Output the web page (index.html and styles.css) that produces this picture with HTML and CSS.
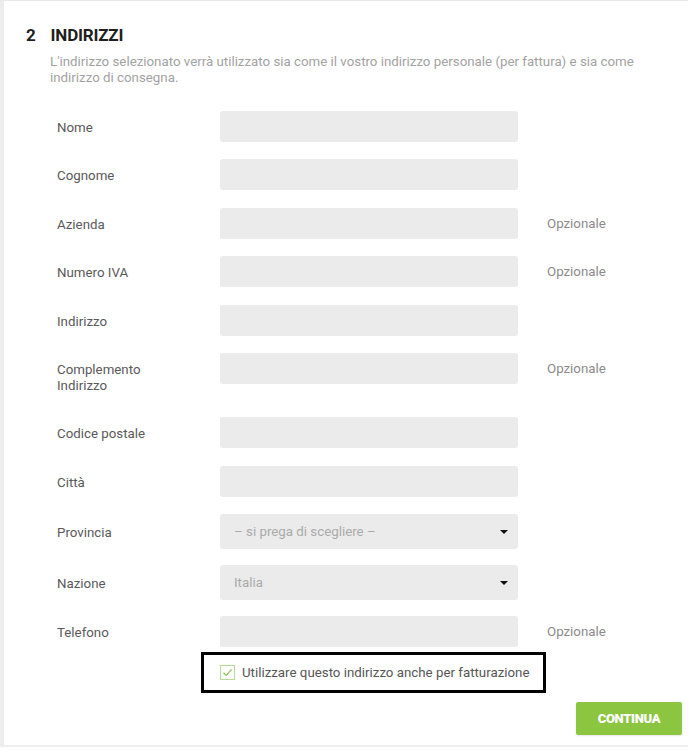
FILE: index.html
```html
<!DOCTYPE html>
<html lang="it">
<head>
<meta charset="utf-8">
<title>Indirizzi</title>
<link rel="stylesheet" href="styles.css">
</head>
<body>
<div class="panel">
  <h2 class="title"><span class="num">2</span><span>INDIRIZZI</span></h2>
  <p class="intro">L'indirizzo selezionato verrà utilizzato sia come il vostro indirizzo personale (per fattura) e sia come indirizzo di consegna.</p>
  <div class="form">
    <div class="row"><span class="label">Nome</span><span class="field"></span></div>
    <div class="row"><span class="label">Cognome</span><span class="field"></span></div>
    <div class="row"><span class="label">Azienda</span><span class="field"></span><span class="opt">Opzionale</span></div>
    <div class="row"><span class="label">Numero IVA</span><span class="field"></span><span class="opt">Opzionale</span></div>
    <div class="row"><span class="label">Indirizzo</span><span class="field"></span></div>
    <div class="row"><span class="label">Complemento<br>Indirizzo</span><span class="field"></span><span class="opt">Opzionale</span></div>
    <div class="row"><span class="label">Codice postale</span><span class="field"></span></div>
    <div class="row"><span class="label">Città</span><span class="field"></span></div>
    <div class="row row-select"><span class="label">Provincia</span><span class="field select"><span class="placeholder">– si prega di scegliere –</span><span class="caret"></span></span></div>
    <div class="row row-select"><span class="label">Nazione</span><span class="field select"><span class="placeholder">Italia</span><span class="caret"></span></span></div>
    <div class="row"><span class="label">Telefono</span><span class="field"></span><span class="opt">Opzionale</span></div>
  </div>
  <div class="check-row">
    <div class="check-box">
      <span class="checkbox"><svg width="13" height="13" viewBox="0 0 13 13"><path d="M2.5 6.8 L5.3 9.4 L10.6 3.4" fill="none" stroke="#8fc155" stroke-width="1.3"/></svg></span>
      <span class="check-text">Utilizzare questo indirizzo anche per fatturazione</span>
    </div>
  </div>
  <div class="actions"><button class="btn">CONTINUA</button></div>
</div>
</body>
</html>
```
FILE: styles.css
```css
* { box-sizing: border-box; }
html, body { margin: 0; padding: 0; background: #fff; }
body { font-family: Roboto, "Liberation Sans", Arial, sans-serif; }

.panel {
  width: 688px;
  height: 747px;
  border-left: 4px solid #ececec;
  border-top: 1px solid #e8e8e8;
  border-bottom: 2px solid #eeeeee;
  padding: 24px 6px 0 22px;
}

.title {
  margin: 0;
  display: flex;
  gap: 15px;
  font-size: 17px;
  line-height: 20px;
  font-weight: 700;
  color: #1f1f1f;
  letter-spacing: -0.2px;
}

.intro {
  margin: 9px 0 0 24px;
  width: 610px;
  font-size: 13.3px;
  line-height: 16px;
  color: #a2a2a2;
}

.form {
  margin-top: 25px;
  display: flex;
  flex-direction: column;
  gap: 17.4px;
}

.row {
  display: flex;
  align-items: flex-start;
}
.row-select + .row { margin-top: -1.4px; }

.label {
  width: 194px;
  padding: 9px 0 6px 31px;
  font-size: 13.3px;
  line-height: 16px;
  color: #595959;
}

.field {
  width: 298px;
  height: 31px;
  background: #ebebeb;
  border-radius: 3px;
}

.row-select .label { padding-top: 11px; }
.select {
  height: 35px;
  display: flex;
  align-items: center;
  justify-content: space-between;
  padding: 0 10px 0 14px;
}
.placeholder { font-size: 13.3px; color: #aaa; }
.caret {
  width: 0; height: 0;
  border-left: 4px solid transparent;
  border-right: 4px solid transparent;
  border-top: 4px solid #111;
  margin-top: 1px;
}

.opt {
  margin-left: 29px;
  padding-top: 8px;
  font-size: 13.3px;
  line-height: 16px;
  color: #8a8a8a;
}

.check-row { margin-top: 5px; padding-left: 175px; }
.check-box {
  width: 345px;
  height: 41px;
  border: 3px solid #000;
  display: flex;
  align-items: center;
  gap: 7px;
  padding: 0 0 0 16px;
}
.checkbox {
  width: 15px;
  height: 15px;
  border: 1px solid #b9dc95;
  display: flex;
  align-items: center;
  justify-content: center;
  background: #fff;
}
.check-text { font-size: 13.3px; color: #555; }

.actions {
  display: flex;
  justify-content: flex-end;
  margin-top: 9px;
}
.btn {
  width: 106px;
  height: 33px;
  border: 0;
  border-radius: 2px;
  background: #8cc540;
  color: #fff;
  font-family: Roboto, "Liberation Sans", Arial, sans-serif;
  font-weight: 900;
  font-size: 13px;
  letter-spacing: -0.3px;
  box-shadow: 0 1px 2px rgba(0,0,0,0.1);
}
```
